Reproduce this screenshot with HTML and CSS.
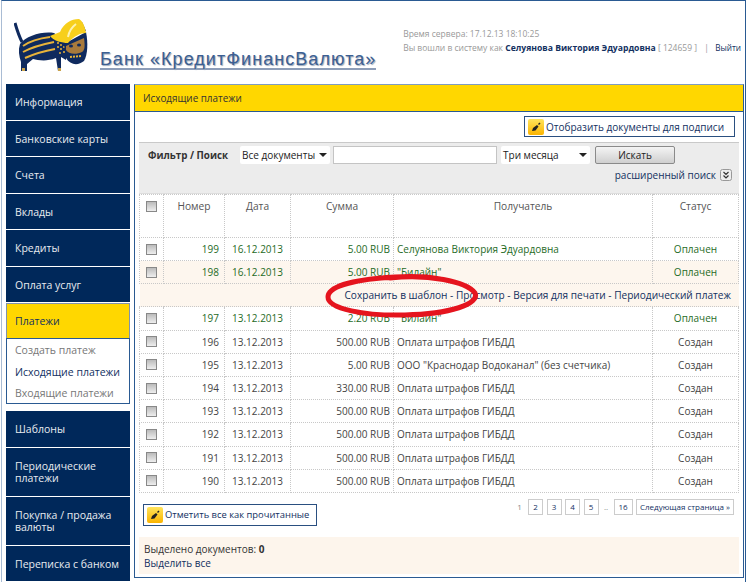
FILE: index.html
```html
<!DOCTYPE html>
<html lang="ru">
<head>
  <meta charset="UTF-8" />
  <title>Исходящие платежи</title>
  <link rel="stylesheet" href="styles.css">
</head>
<body>
<div class="page">
  <header class="top">
    <div class="brand">
      <svg class="logo" width="74" height="53" viewBox="14 19 74 53">
        <!-- tail -->
        <path d="M15 23 C17 30 19 36 22 42" fill="none" stroke="#0f2a5e" stroke-width="3"/>
        <!-- body -->
        <path d="M20 44 C26 36 42 31 54 33 L66 42 L66 60 L61 57 L61 71 L58 71 L56 58 C46 62 38 60 33 59 L27 64 L27 71 L21 71 L21 62 C19 56 18 50 20 44Z" fill="#0f2a5e"/>
        <path d="M23 46 C30 41 42 38 50 37 M23 52 C32 47 44 44 54 42 M25 58 C34 54 44 51 55 49" fill="none" stroke="#e8b33a" stroke-width="2"/>
        <path d="M22 71h3v-3h-3zM58 71h3v-3h-3z" fill="#c9a24a"/>
        <g fill="#e8b33a"><circle cx="58" cy="43" r="1"/><circle cx="61" cy="45" r="1"/><circle cx="58" cy="47" r="1"/><circle cx="61" cy="49" r="1"/><circle cx="64" cy="47" r="1"/><circle cx="60" cy="53" r="1"/><circle cx="64" cy="52" r="1"/></g>
        <!-- head -->
        <path d="M64 44 L86 32 C88 42 88 54 84 61 C78 66 70 65 66 58Z" fill="#0f2a5e"/>
        <path d="M66 46 L84 38 C85 46 85 50 82 52 C76 55 68 54 66 50Z" fill="#a87a3c"/>
        <ellipse cx="71" cy="46" rx="2" ry="1.6" fill="#0f2a5e"/><ellipse cx="79" cy="45" rx="2" ry="1.6" fill="#0f2a5e"/>
        <path d="M70 57 L82 56" stroke="#e8b33a" stroke-width="2" stroke-dasharray="2 1"/>
        <path d="M82 22 L86 31 L81 30Z" fill="#0f2a5e"/>
        <!-- helmet -->
        <path d="M50 36 C54 34 58 33 60 32 C64 23 71 19 79 19 C83 21 85 27 86 33 C80 33 74 36 68 43 C62 43 54 41 50 36Z" fill="#f7cf1c"/>
        <path d="M68 37 C69 31 72 27 76 24" fill="none" stroke="#fdf3b0" stroke-width="2"/>
      </svg>
      <span class="bank-name">Банк «КредитФинансВалюта»</span>
    </div>
    <div class="session">
      <div class="session-time">Время сервера: 17.12.13 18:10:25</div>
      <div class="session-user">Вы вошли в систему как <b>Селуянова Виктория Эдуардовна</b> [ 124659 ] <span class="sep">|</span> <a class="logout">Выйти</a></div>
    </div>
  </header>

  <div class="columns">
    <nav class="side">
      <a class="side-item">Информация</a>
      <a class="side-item">Банковские карты</a>
      <a class="side-item">Счета</a>
      <a class="side-item">Вклады</a>
      <a class="side-item">Кредиты</a>
      <a class="side-item">Оплата услуг</a>
      <div class="side-group">
        <a class="side-item active">Платежи</a>
        <div class="sub">
          <a>Создать платеж</a>
          <a class="current">Исходящие платежи</a>
          <a>Входящие платежи</a>
        </div>
      </div>
      <a class="side-item">Шаблоны</a>
      <a class="side-item tall">Периодические<br>платежи</a>
      <a class="side-item tall">Покупка / продажа<br>валюты</a>
      <a class="side-item">Переписка с банком</a>
    </nav>

    <main class="panel">
      <div class="panel-title">Исходящие платежи</div>
      <div class="panel-body">
        <div class="tools">
          <a class="btn">
            <svg class="pen" width="16" height="16" viewBox="0 0 16 16"><defs><linearGradient id="pg" x1="0" y1="0" x2="0" y2="1"><stop offset="0" stop-color="#ffe45c"/><stop offset="1" stop-color="#fbb400"/></linearGradient></defs><rect width="16" height="16" rx="2" fill="url(#pg)"/><path d="M4 12l1-3 4-3 1.500 1.500-3 4z" fill="#222"/><path d="M10 5l1.500-1.500 1 1-1.500 1.500z" fill="#222"/></svg>
            Отобразить документы для подписи
          </a>
        </div>

        <form class="filter">
          <div class="filter-row">
            <b class="filter-label">Фильтр / Поиск</b>
            <span class="sel sel-doc">Все документы<i></i></span>
            <input class="search" type="text" />
            <span class="sel sel-period">Три месяца<i></i></span>
            <span class="find">Искать</span>
          </div>
          <div class="filter-more">расширенный поиск
            <svg class="more-ico" width="12" height="12" viewBox="0 0 12 12"><rect x="0.500" y="0.500" width="11" height="11" rx="2" fill="#eee" stroke="#999"/><path d="M3.500 3l2.500 2.500 2.500-2.500M3.500 6.500l2.500 2.500 2.500-2.500" fill="none" stroke="#333" stroke-width="1.200"/></svg>
          </div>
        </form>

        <table class="docs">
          <colgroup>
            <col class="c-check"><col class="c-num"><col class="c-date"><col class="c-sum"><col><col class="c-status">
          </colgroup>
          <thead>
            <tr>
              <th><input type="checkbox" /></th><th>Номер</th><th>Дата</th><th>Сумма</th><th>Получатель</th><th>Статус</th>
            </tr>
          </thead>
          <tbody>
            <tr class="paid"><td><input type="checkbox" /></td><td class="r">199</td><td>16.12.2013</td><td class="r">5.00 RUB</td><td class="l">Селуянова Виктория Эдуардовна</td><td>Оплачен</td></tr>
            <tr class="paid open"><td><input type="checkbox" /></td><td class="r">198</td><td>16.12.2013</td><td class="r">5.00 RUB</td><td class="l">"Билайн"</td><td>Оплачен</td></tr>
            <tr class="actions"><td colspan="6"><a>Сохранить в шаблон</a> - <a>Просмотр</a> - <a>Версия для печати</a> - <a>Периодический платеж</a></td></tr>
            <tr class="paid"><td><input type="checkbox" /></td><td class="r">197</td><td>13.12.2013</td><td class="r">2.20 RUB</td><td class="l">"Билайн"</td><td>Оплачен</td></tr>
            <tr><td><input type="checkbox" /></td><td class="r">196</td><td>13.12.2013</td><td class="r">500.00 RUB</td><td class="l">Оплата штрафов ГИБДД</td><td>Создан</td></tr>
            <tr><td><input type="checkbox" /></td><td class="r">195</td><td>13.12.2013</td><td class="r">5.00 RUB</td><td class="l">ООО "Краснодар Водоканал" (без счетчика)</td><td>Создан</td></tr>
            <tr><td><input type="checkbox" /></td><td class="r">194</td><td>13.12.2013</td><td class="r">330.00 RUB</td><td class="l">Оплата штрафов ГИБДД</td><td>Создан</td></tr>
            <tr><td><input type="checkbox" /></td><td class="r">193</td><td>13.12.2013</td><td class="r">500.00 RUB</td><td class="l">Оплата штрафов ГИБДД</td><td>Создан</td></tr>
            <tr><td><input type="checkbox" /></td><td class="r">192</td><td>13.12.2013</td><td class="r">500.00 RUB</td><td class="l">Оплата штрафов ГИБДД</td><td>Создан</td></tr>
            <tr><td><input type="checkbox" /></td><td class="r">191</td><td>13.12.2013</td><td class="r">500.00 RUB</td><td class="l">Оплата штрафов ГИБДД</td><td>Создан</td></tr>
            <tr><td><input type="checkbox" /></td><td class="r">190</td><td>13.12.2013</td><td class="r">500.00 RUB</td><td class="l">Оплата штрафов ГИБДД</td><td>Создан</td></tr>
          </tbody>
        </table>

        <div class="under">
          <a class="btn btn-mark">
            <svg class="pen" width="16" height="16" viewBox="0 0 16 16"><rect width="16" height="16" rx="2" fill="url(#pg)"/><path d="M4 12l1-3 4-3 1.500 1.500-3 4z" fill="#222"/><path d="M10 5l1.500-1.500 1 1-1.500 1.500z" fill="#222"/></svg>
            Отметить все как прочитанные
          </a>
          <div class="pager">
            <span class="now">1</span><a>2</a><a>3</a><a>4</a><a>5</a><span class="dots">..</span><a class="last">16</a><a class="next">Следующая страница »</a>
          </div>
        </div>

        <div class="summary">
          <div>Выделено документов: <b>0</b></div>
          <div class="select-all">Выделить все</div>
        </div>
      </div>

      <!-- hand-drawn mark over the action row -->
      <svg class="scribble" width="170" height="56" viewBox="0 0 170 56">
        <path d="M70 7 C108 3 146 10 155 22 C160 33 130 43 85 44 C45 45 8 38 8 26 C8 14 40 8 75 6 C95 5 110 6 120 8" fill="none" stroke="#e5141e" stroke-width="5" stroke-linecap="round"/>
      </svg>
    </main>
  </div>
</div>
</body>
</html>
```

FILE: styles.css
```css
html, body {
  margin: 0;
  height: 582px;
  overflow: hidden;
  background: #fff;
}
body {
  font-family: "Open Sans", sans-serif;
  font-size: 10.5px;
  color: #444;
}
a {
  color: #12305f;
}
.page {
  box-sizing: border-box;
  height: 582px;
  margin-right: 4px;
  padding: 0 1px 0 4px;
  border-top: 1px solid #2a5a92;
  border-left: 1px solid #a9bcd4;
  border-right: 1px solid #2a5a92;
  margin-left: 1px;
}

/* header */
.top {
  display: flex;
  justify-content: space-between;
  height: 83px;
}
.brand {
  display: flex;
  align-items: flex-start;
  padding: 18px 0 0 8px;
}
.logo {
  flex: none;
}
.bank-name {
  margin: 31px 0 0 12px;
  padding-bottom: 0;
  height: 18px;
  font-family: "Liberation Sans", sans-serif;
  font-size: 18px;
  line-height: 18px;
  letter-spacing: 1.06px;
  white-space: nowrap;
  color: #3c5f92;
  border-bottom: 2px solid #8d9db8;
  text-shadow: 1px 1px 1px #9aa6b8;
}
.session {
  padding: 26px 3px 0 0;
  font-size: 8.5px;
  color: #999;
}
.session-time {
  height: 14px;
  line-height: 14px;
}
.session-user {
  line-height: 14px;
  white-space: nowrap;
}
.session-user b {
  color: #12305f;
  font-size: 8.6px;
  font-weight: 700;
}
.sep {
  margin: 0 4px 0 5px;
}
.logout {
  color: #12305f;
  font-size: 8.2px;
}

.columns {
  display: flex;
  gap: 4px;
  align-items: flex-start;
}

/* left menu */
.side {
  width: 124px;
  flex: none;
  display: flex;
  flex-direction: column;
  gap: 1px;
}
.side-item {
  display: flex;
  align-items: center;
  box-sizing: border-box;
  height: 35.5px;
  padding: 1px 10px 0 9px;
  background: #00285a;
  color: #e8ebf0;
  font-size: 10.5px;
  line-height: 12.5px;
}
.side-item.tall {
  height: 48px;
}
.side-item.active {
  height: 35px;
  background: #ffd700;
  color: #12305f;
  border: 1px solid #7f93ad;
  border-bottom: 0;
  padding-left: 8px;
}
.side-group {
  margin-bottom: 6px;
  border-bottom: 1px solid #2a5a92;
}
.sub {
  box-sizing: border-box;
  height: 65px;
  padding-top: 1px;
  border-left: 1px solid #2a5a92;
  border-right: 1px solid #2a5a92;
  border-top: 1px solid #2a5a92;
}
.sub a {
  display: block;
  height: 21.5px;
  line-height: 21.5px;
  padding-left: 8px;
  color: #777;
}
.sub a.current {
  color: #12305f;
}

/* main panel */
.panel {
  position: relative;
  box-sizing: border-box;
  flex: 1;
  height: 494px;
  border: 1px solid #2a5a92;
  border-top-color: #7f9cc0;
}
.panel-title {
  height: 26px;
  line-height: 26px;
  padding-left: 8px;
  background: #ffd700;
  border-bottom: 1px solid #2a5a92;
  color: #333;
  font-size: 9.9px;
}
.panel-body {
  padding: 4px 3px 0 4px;
}
.tools {
  display: flex;
  justify-content: flex-end;
  padding-right: 5px;
  height: 26px;
}
.btn {
  display: flex;
  align-items: center;
  gap: 2px;
  box-sizing: border-box;
  height: 21px;
  padding: 0 10px 0 3px;
  border: 1px solid #2a4f80;
  color: #12305f;
  font-size: 10px;
  white-space: nowrap;
}
.pen {
  flex: none;
}

/* filter */
.filter {
  box-sizing: border-box;
  width: 600px;
  height: 52px;
  background: #ececec;
  border-top: 1px solid #c9c9c9;
  border-bottom: 1px solid #ddd;
}
.filter-row {
  display: flex;
  align-items: center;
  box-sizing: border-box;
  height: 21px;
  padding-top: 3px;
}
.filter-label {
  width: 92px;
  margin-left: 9px;
  font-size: 9.8px;
  font-weight: 700;
  color: #333;
  white-space: nowrap;
}
.sel {
  position: relative;
  box-sizing: border-box;
  height: 18px;
  line-height: 18px;
  padding-left: 2px;
  background: #fff;
  color: #222;
  border-radius: 2px;
  font-size: 10px;
}
.sel i {
  position: absolute;
  right: 3px;
  top: 7px;
  border: 4px solid transparent;
  border-top-color: #222;
  border-bottom: 0;
}
.sel-doc {
  width: 90px;
}
.search {
  box-sizing: border-box;
  width: 164px;
  height: 18px;
  margin: 0 4px 0 3px;
  padding: 0;
  background: #fff;
  border: 1px solid #c4c4c4;
}
.sel-period {
  width: 89px;
}
.find {
  box-sizing: border-box;
  width: 80px;
  height: 18px;
  line-height: 16px;
  margin-left: 5px;
  text-align: center;
  color: #222;
  font-size: 10px;
  border: 1px solid #8a8a8a;
  border-radius: 2px;
  background: linear-gradient(#f4f4f4, #cfcfcf);
}
.filter-more {
  display: flex;
  justify-content: flex-end;
  align-items: center;
  gap: 4px;
  height: 22px;
  padding-right: 7px;
  font-size: 10px;
  color: #12305f;
}
.more-ico {
  flex: none;
}

/* documents table */
.docs {
  width: 600px;
  table-layout: fixed;
  border-collapse: collapse;
  font-size: 10px;
}
.c-check { width: 24px; }
.c-num { width: 61px; }
.c-date { width: 66px; }
.c-sum { width: 103px; }
.c-status { width: 86px; }
.docs th, .docs td {
  border: 1px dotted #c8c8c8;
  padding: 0 3px;
  text-align: center;
  white-space: nowrap;
}
.docs th {
  height: 43px;
  padding-bottom: 20px;
  font-size: 10.2px;
  font-weight: 400;
  color: #555;
  box-sizing: border-box;
}
.docs td {
  height: 23.2px;
  box-sizing: border-box;
}
.docs .r {
  text-align: right;
}
.docs td.r:nth-child(2) {
  padding-right: 5px;
}
.docs .l {
  text-align: left;
}
.docs input {
  display: block;
  box-sizing: border-box;
  width: 11px;
  height: 11px;
  margin: 0 auto;
  appearance: none;
  background: linear-gradient(#bbb, #eee);
  border: 1px solid #888;
}
.paid td {
  color: #1f6b1f;
}
.open td {
  background: #fdf6ee;
}
.docs .actions td {
  height: 23px;
  background: #fdf6ee;
  padding-left: 205px;
  text-align: left;
  font-size: 10.1px;
  color: #12305f;
  border-left: 0;
  border-right: 0;
}

.under {
  display: flex;
  justify-content: space-between;
  align-items: flex-start;
  height: 44px;
  padding-left: 4px;
}
.btn-mark {
  margin-top: 11px;
  height: 22px;
  padding-right: 7px;
  font-size: 9.4px;
}
.pager {
  display: flex;
  align-items: center;
  gap: 3.5px;
  margin: 6px 6px 0 0;
  font-size: 8px;
}
.pager a {
  box-sizing: border-box;
  width: 15px;
  height: 16px;
  line-height: 14px;
  text-align: center;
  color: #12305f;
  border: 1px solid #ccc;
  white-space: nowrap;
}
.pager .now {
  width: 10px;
  text-align: center;
  color: #888;
}
.pager .dots {
  width: 8px;
  text-align: center;
  color: #888;
}
.pager .last {
  width: 19px;
}
.pager .next {
  width: 98px;
}
.summary {
  box-sizing: border-box;
  width: 600px;
  height: 37px;
  padding: 5px 5px 0;
  background: #fdf5ec;
  font-size: 10px;
  line-height: 14.5px;
  color: #333;
}
.select-all {
  color: #12305f;
}
.scribble {
  position: absolute;
  left: 185px;
  top: 186px;
}
```
